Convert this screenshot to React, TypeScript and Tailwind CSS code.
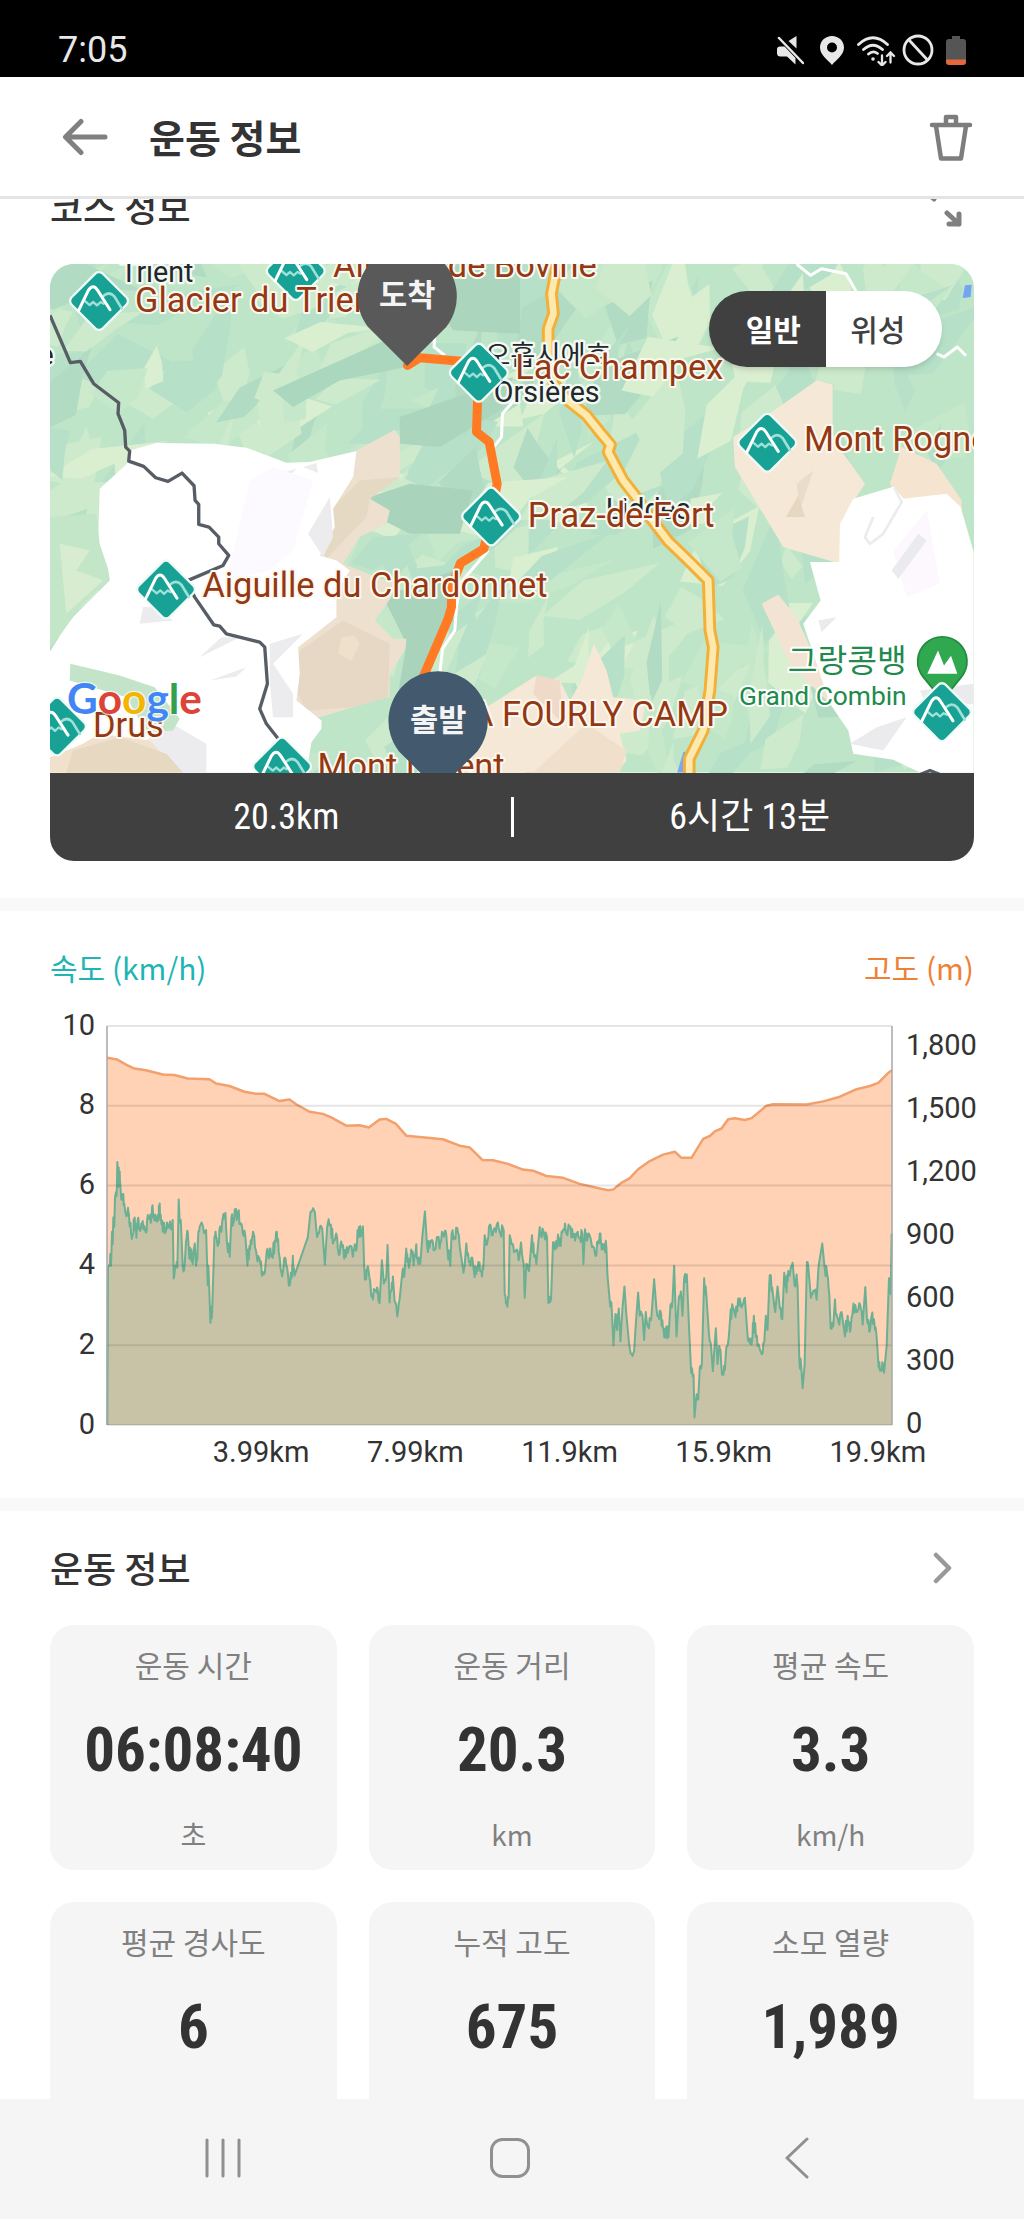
import React from "react";

type Point = [number, number];

const parse = (raw: string): Point[] =>
  raw
    .trim()
    .split(/\s+/)
    .map((pair) => pair.split(",").map(Number) as Point);

const toPath = (points: Point[]) =>
  points.map(([x, y], i) => `${i ? "L" : "M"}${x} ${y}`).join("");

/* ---------- Status bar ---------- */

function StatusBar() {
  return (
    <div className="flex h-[77px] shrink-0 items-center justify-between bg-black pt-[23px] pr-[57px] pl-[58px] text-[#e8e8e8]">
      <span className="font-['Roboto',sans-serif] text-[36px] leading-none">7:05</span>
      <div className="flex items-center">
        <svg className="h-8 w-7" viewBox="0 0 28 32" aria-label="Muted" role="img">
          <path d="M20.500 2V14.500L12.500 7ZM4 12.500H8.500L19.500 24V30.500L11 22.500H4.500Q1 22.500 1 19V15.500Q1 12.500 4 12.500Z" fill="currentColor" />
          <path d="M3 4L27 29" stroke="currentColor" strokeWidth="2.500" strokeLinecap="round" />
        </svg>
        <svg className="ml-[14px] h-8 w-7" viewBox="0 0 28 32" aria-label="Location" role="img">
          <path
            fillRule="evenodd"
            fill="currentColor"
            d="M14 2C7.300 2 2 7 2 13.500 2 21 10 26 14 31c4-5 12-10 12-17.500C26 7 20.700 2 14 2zm0 6.500a5 5 0 1 1 0 10 5 5 0 0 1 0-10z"
          />
        </svg>
        <svg className="ml-[10px] h-8 w-10" viewBox="0 0 40 32" aria-label="Wi-Fi" role="img" fill="none" stroke="currentColor" strokeWidth="2.800" strokeLinecap="round">
          <path d="M2.500 10.500Q17 -3 31.500 10.500M7.500 15.500Q17 7 26.500 15.500M12.500 20Q17 16 21.500 19.500" />
          <circle cx="17" cy="25" r="1.800" fill="currentColor" stroke="none" />
          <path strokeWidth="2.300" d="M26 21.500V31M22.500 28l3.500 3.500 3.500-3.500M34.500 28.500V19M31 22l3.500-3.500L38 22" />
        </svg>
        <svg className="ml-[6px] h-8 w-8" viewBox="0 0 32 32" aria-label="Blocked" role="img" fill="none" stroke="currentColor" strokeWidth="2.800">
          <circle cx="16" cy="16" r="14" />
          <path d="M7 6L25.500 26" />
        </svg>
        <svg className="ml-[11px] h-8 w-[22px]" viewBox="0 0 22 32" aria-label="Battery low" role="img">
          <path d="M7 2h8v3h3q3 0 3 3v18H1V8q0-3 3-3h3z" fill="#555" />
          <path d="M1 25.500h20V28q0 3-3 3H4q-3 0-3-3z" fill="#e4683c" />
        </svg>
      </div>
    </div>
  );
}

/* ---------- Header ---------- */

function Header() {
  return (
    <header className="flex h-[122px] shrink-0 items-center border-b-[3px] border-[#e4e4e4] bg-white pr-[51px] pl-[62px]">
      <button type="button" aria-label="뒤로" className="text-[#808080]">
        <svg className="h-10 w-[46px]" viewBox="0 0 46 40" fill="none" stroke="currentColor" strokeWidth="5" strokeLinecap="round" strokeLinejoin="round">
          <path d="M19 4.500L3.500 20L19 35.500M4 20H43" />
        </svg>
      </button>
      <h1 className="ml-[41px] pb-[2px] text-[39px] leading-[56px] font-bold text-[#333]">운동 정보</h1>
      <button type="button" aria-label="삭제" className="ml-auto text-[#7d7d7d]">
        <svg className="h-12 w-[44px]" viewBox="0 0 44 48" fill="none" stroke="currentColor" strokeWidth="4.500" strokeLinecap="round" strokeLinejoin="round">
          <path d="M3 12H41M7 13L12 45.500H32L37 13M17 11V4H27V11" />
        </svg>
      </button>
    </header>
  );
}

/* ---------- Map ---------- */

const SHADES = ["#cdebcc", "#cdebcc", "#daeed0", "#b2dbc4", "#b6e0c8", "#b6e0c8", "#c6e8ca"];

function makeFacets(count: number) {
  let seed = 4711;
  const rnd = () => {
    seed = (seed * 16807) % 2147483647;
    return seed / 2147483647;
  };
  return Array.from({ length: count }, () => {
    const cx = rnd() * 2800;
    const cy = rnd() * 1560;
    const len = 60 + rnd() * 140;
    const wid = 25 + rnd() * 65;
    const angle = (cx < 1400 ? -0.7 : -1.1) + (rnd() - 0.5) * 1.6;
    const c = Math.cos(angle);
    const s = Math.sin(angle);
    const corner = (u: number, v: number): string =>
      `${Math.round(cx + u * c - v * s)},${Math.round(cy + u * s + v * c)}`;
    return {
      points: [
        corner(-len, (rnd() - 0.5) * wid),
        corner(-len * 0.2, -wid),
        corner(len, (rnd() - 0.5) * wid),
        corner(len * 0.3, wid * rnd()),
        corner(-len * 0.5, wid),
      ].join(" "),
      fill: SHADES[Math.floor(rnd() * SHADES.length)],
    };
  });
}

const FACETS = makeFacets(300);

const PEAKS: Point[] = [
  [178, 152],
  [768, 62],
  [1317, 367],
  [1354, 798],
  [2182, 577],
  [379, 1017],
  [52, 1428],
  [727, 1548],
  [2706, 1385],
];

function Peak({ x, y }: { x: number; y: number }) {
  return (
    <g transform={`translate(${x} ${y})`}>
      <rect x="-66" y="-66" width="132" height="132" rx="16" transform="rotate(45)" fill="#17a295" stroke="#effaf6" strokeWidth="7" />
      <g fill="none" strokeLinecap="round" strokeLinejoin="round">
        <path d="M14 -16Q30 -30 46 -14L68 22" stroke="#9fe0d8" strokeWidth="8" />
        <path d="M-42 0L-28 12L-17 3L-6 13L5 3L14 8" stroke="#9fe0d8" strokeWidth="7" />
        <path d="M-62 30L-32 -32Q-18 -54 -4 -32L33 26" stroke="#fff" strokeWidth="9" />
      </g>
    </g>
  );
}

function Pin({ x, y, fill, label }: { x: number; y: number; fill: string; label: string }) {
  return (
    <g transform={`translate(${x} ${y})`}>
      <path d="M0 210L-118 92A149 149 0 1 1 118 92Z" fill={fill} />
      <text x="0" y="30" textAnchor="middle" fontSize="92" fontWeight="700" fill="#f4f4f4" fontFamily="Noto Sans CJK KR, sans-serif">
        {label}
      </text>
    </g>
  );
}

const PLACES: { x: number; y: number; text: string; anchor?: "start" | "end" }[] = [
  { x: 880, y: 80, text: "Alpage de Bovine" },
  { x: 286, y: 185, text: "Glacier du Trient" },
  { x: 1426, y: 387, text: "Lac Champex" },
  { x: 1464, y: 830, text: "Praz-de-Fort" },
  { x: 2292, y: 602, text: "Mont Rogneux" },
  { x: 488, y: 1039, text: "Aiguille du Chardonnet" },
  { x: 160, y: 1460, text: "Drus" },
  { x: 833, y: 1582, text: "Mont Dolent" },
  { x: 2064, y: 1426, text: "LA FOURLY CAMP", anchor: "end" },
];

const GOOGLE: [string, string][] = [
  ["G", "#4285f4"],
  ["o", "#db4437"],
  ["o", "#f4b400"],
  ["g", "#4285f4"],
  ["l", "#34a04f"],
  ["e", "#db4437"],
];

const TRAIL_ROAD =
  "M1552 41L1535 130L1541 190L1525 235V310L1542 400L1590 455L1640 495L1680 545L1712 583L1705 605L1750 690L1785 735L1830 800L1885 872L1945 930L2005 990L2010 1140L2020 1190L2010 1320L1990 1440L1948 1525V1570";

function CourseMap() {
  return (
    <svg className="block w-full" viewBox="31 41 2771 1525" role="img" aria-label="코스 지도">
      <rect x="31" y="41" width="2771" height="1525" fill="#bfe5c8" />
      {FACETS.map((f, i) => (
        <polygon key={i} points={f.points} fill={f.fill} />
      ))}
      <polygon points="1250,41 1440,41 1440,250 1240,240 1200,180" fill="#abd5bd" />
      <polygon points="1080,500 1420,380 1380,480 1200,590 1080,580" fill="#abd5bd" />
      <polygon points="700,420 1080,250 1100,350 900,390 760,470" fill="#acd7bf" />
      <polygon points="990,740 1110,700 1300,720 1260,850 1110,850 1010,800" fill="#a9d4bb" />
      <polygon points="1030,1040 1240,960 1200,1200 1060,1420 1100,1180" fill="#a9d4bb" />

      {/* Tan ridges */}
      <polygon points="950,600 1065,538 1080,560 1080,680 990,745 1050,780 1040,820 960,860 910,940 1060,1000 1055,1040 1005,1110 1060,1165 1100,1165 1095,1200 1050,1270 1050,1340 1000,1350 940,1370 840,1400 740,1400 700,1100 820,900 880,760" fill="#eee0ce" />
      <polygon points="960,690 1080,680 990,745 980,800 860,925 840,900 880,770" fill="#e6d9c3" />
      <polygon points="780,1200 910,1110 1050,1180 1045,1340 940,1370 800,1380 760,1300" fill="#e6d8c4" />
      <polygon points="905,1160 945,1155 960,1180 935,1230 895,1210" fill="#efe0cc" />
      <polygon points="2160,510 2330,390 2378,402 2378,565 2475,700 2410,800 2400,940 2230,890 2170,790 2085,650 2080,560" fill="#f6e8d6" />
      <polygon points="2270,700 2320,660 2280,780" fill="#eadccb" />
      <polygon points="2275,735 2295,800 2238,800" fill="#e6d7c2" />
      <polygon points="2585,590 2690,640 2765,750 2765,800 2600,780 2550,700" fill="#f5e4d0" />
      <polygon points="2165,1060 2215,1032 2270,1100 2310,1190 2420,1370 2360,1350 2250,1240" fill="#f3e3d2" />
      <polygon points="1130,1566 1340,1370 1490,1275 1560,1290 1590,1350 1625,1290 1662,1180 1700,1260 1720,1340 1820,1350 1800,1440 1740,1450 1760,1530 1730,1566" fill="#f6e8d6" />
      <polygon points="1490,1275 1560,1290 1570,1420 1480,1330" fill="#efd9c8" />
      <polygon points="1480,1566 1640,1420 1760,1500 1740,1566" fill="#f0dfcb" />

      {/* Snow fields */}
      <polygon points="270,600 350,578 520,580 620,592 740,637 810,635 950,602 940,680 880,775 885,830 840,915 890,930 930,960 890,1030 890,1100 775,1190 780,1270 770,1350 845,1410 845,1435 815,1475 800,1566 31,1566 31,1202 90,1110 210,990 200,950 175,890 180,715 262,640" fill="#fff" />
      <polygon points="31,800 170,790 180,880 205,955 210,985 130,1060 31,1195" fill="#c3e6c9" />
      <polygon points="60,880 150,900 110,960 190,990 80,1090" fill="#d8edd0" />
      <g fill="#ececee">
        <polygon points="688,680 770,655 720,705" />
        <polygon points="790,650 830,638 835,668" />
        <polygon points="630,885 735,845 738,862 650,898" />
        <polygon points="805,850 870,740 880,860 850,920" />
        <polygon points="310,1070 345,1070 400,1110 300,1120" />
        <polygon points="480,1220 545,1160 600,1160" />
        <polygon points="510,1290 620,1250 590,1278" />
        <polygon points="690,1180 790,1150 700,1240 760,1330 760,1400 700,1400 690,1290" />
        <polygon points="310,1480 380,1410 500,1480 500,1566 400,1566" />
      </g>
      <polygon points="630,690 700,650 820,690 760,900 690,960 560,990" fill="#fdfaff" />
      <polygon points="92,1240 240,1275 345,1310 420,1405 400,1440 320,1445 260,1340 90,1290" fill="#c3e4c8" />
      <polygon points="31,1520 130,1480 180,1450 330,1470 420,1566 31,1566" fill="#f0e0cc" />
      <polygon points="100,1500 240,1460 380,1510 430,1566 80,1566" fill="#e7d8c2" />
      <polygon points="2398,935 2400,820 2440,745 2562,708 2590,745 2720,730 2762,770 2801,905 2801,1566 2640,1566 2560,1528 2440,1510 2425,1440 2370,1360 2290,1120 2342,1050 2310,935" fill="#fff" />
      <polygon points="2560,900 2660,780 2700,1000 2600,1040" fill="#fcf8fd" />
      <g fill="#ebebed">
        <polygon points="2635,850 2660,870 2575,985 2555,960" />
        <polygon points="2335,1110 2390,1100 2345,1145" />
        <polygon points="2430,1480 2510,1430 2600,1400 2530,1500" />
        <polygon points="2640,1320 2801,1300 2801,1360 2660,1370" />
      </g>
      <path d="M2562 710L2585 755L2530 850L2490 880L2475 860L2500 800" fill="none" stroke="#ececec" strokeWidth="8" />

      {/* Minor roads and water */}
      <g fill="none" stroke="#fff" strokeWidth="9" strokeLinejoin="round">
        <path d="M1185 240L1183 290L1215 315M1440 430L1388 490L1385 560L1350 605M1345 900L1260 1000L1250 1070L1245 1140L1208 1195L1200 1270" />
        <path d="M2270 41L2312 75L2345 55L2418 70L2448 122M2690 310L2712 320L2752 290L2778 316" />
      </g>
      <polygon points="2775,105 2795,103 2792,140 2768,143" fill="#73a5f3" />
      <polygon points="1930,1505 1950,1500 1930,1566 1912,1566" fill="#7da7ee" />

      {/* Main road */}
      <path d={TRAIL_ROAD} fill="none" stroke="#f3b038" strokeWidth="38" strokeLinejoin="round" />
      <path d={TRAIL_ROAD} fill="none" stroke="#fde8ad" strokeWidth="20" strokeLinejoin="round" />

      {/* National border */}
      <path
        d="M31 195L92 337L122 333L162 400L237 457L235 490L255 540L258 590L270 602L267 632L312 648L348 682L385 693L427 668L463 706L466 750L477 762V822L508 830L537 860V880L567 915L550 945L440 992L465 1040L522 1123L540 1127L560 1150L660 1175L675 1190L683 1300L660 1375L680 1420L727 1480M2640 1572L2670 1560L2700 1572"
        fill="none"
        stroke="#575d65"
        strokeWidth="10"
        strokeLinejoin="round"
      />

      {/* Recorded route */}
      <g fill="none" stroke="#ff7a22" strokeWidth="27" strokeLinecap="round" strokeLinejoin="round">
        <path d="M1103 345L1140 322L1317 337L1310 545L1348 575L1372 700L1354 798L1332 895L1262 938L1235 1010V1070L1225 1105L1150 1280" />
      </g>

      {/* Town names */}
      <g fontSize="86" fill="#23272b" stroke="#f3faf3" strokeWidth="14" strokeLinejoin="round" paintOrder="stroke" fontFamily="Roboto, Noto Sans CJK KR, sans-serif">
        <text x="242" y="95">Trient</text>
        <text x="42" y="345" textAnchor="end">Vallorcine</text>
        <text x="1336" y="345" fontSize="82">오흡시에흐</text>
        <text x="1362" y="456">Orsières</text>
        <text x="1698" y="806">Liddes</text>
      </g>

      {PEAKS.map(([x, y]) => (
        <React.Fragment key={`${x}-${y}`}>
          {x === 2706 && (
            <g>
              <path d="M2707 1350L2650 1280A74 74 0 1 1 2764 1280Z" fill="#2fa84f" stroke="#218a3f" strokeWidth="5" />
              <path d="M2662 1270L2694 1200L2712 1245L2733 1216L2752 1270Z" fill="#fff" />
            </g>
          )}
          <Peak x={x} y={y} />
        </React.Fragment>
      ))}

      {/* Landmark names */}
      <g fontSize="103" fill="#933813" stroke="#fdf8f0" strokeWidth="12" strokeLinejoin="round" paintOrder="stroke" fontFamily="Roboto, sans-serif">
        {PLACES.map((p) => (
          <text key={p.text} x={p.x} y={p.y} textAnchor={p.anchor ?? "start"}>
            {p.text}
          </text>
        ))}
      </g>
      <g fill="#218a4c" stroke="#fff" strokeWidth="12" strokeLinejoin="round" paintOrder="stroke" textAnchor="end">
        <text x="2600" y="1264" fontSize="97" fontFamily="Noto Sans CJK KR, sans-serif">그랑콩뱅</text>
        <text x="2600" y="1364" fontSize="79" fontFamily="Roboto, sans-serif">Grand Combin</text>
      </g>

      <text x="82" y="1391" fontSize="127" fontFamily="Lato, sans-serif" fontWeight="700" stroke="#fff" strokeWidth="8" paintOrder="stroke" strokeOpacity="0.700">
        {GOOGLE.map(([ch, color], i) => (
          <tspan key={i} fill={color}>
            {ch}
          </tspan>
        ))}
      </text>

      <Pin x={1102} y={137} fill="#595959" label="도착" />
      <Pin x={1195} y={1410} fill="#43596d" label="출발" />
    </svg>
  );
}

function CourseSection() {
  return (
    <section className="-mt-[49px] px-[50px] pb-[37px]">
      <div className="flex h-[114px] items-center justify-between pr-[12px]">
        <h2 className="pb-[2px] text-[36px] leading-[52px] font-medium text-[#333]">코스 정보</h2>
        <button type="button" aria-label="지도 확대" className="text-[#808080]">
          <svg className="h-[44px] w-[44px]" viewBox="0 0 44 44" fill="none" stroke="currentColor" strokeWidth="5" strokeLinecap="round" strokeLinejoin="round">
            <path d="M4 11V3H12M4 3L16 14M29 28L41 39M41 29V39H31" />
          </svg>
        </button>
      </div>
      <div className="relative overflow-hidden rounded-[24px]">
        <CourseMap />
        <div className="absolute top-[27px] right-[32px] flex h-[76px] w-[233px] overflow-hidden rounded-full text-[30px] shadow-md">
          <button type="button" aria-pressed="true" className="flex-1 bg-[#404040] pb-[2px] pl-3 font-bold text-white">
            일반
          </button>
          <button type="button" aria-pressed="false" className="flex-1 bg-white pr-3 pb-[2px] font-medium text-[#404040]">
            위성
          </button>
        </div>
        <div className="flex h-[88px] items-center bg-[#404040] font-['Roboto_Condensed','Noto_Sans_CJK_KR',sans-serif] text-[36px] text-white">
          <span className="flex-1 pl-3 text-center">20.3km</span>
          <span className="h-10 w-[3px] bg-white" />
          <span className="flex-1 pl-3 text-center">6시간 13분</span>
        </div>
      </div>
    </section>
  );
}

/* ---------- Chart ---------- */

const ELEVATION = parse(`
233,358 264,363 290,377 315,388 350,393 400,405 435,406 475,416 540,418 560,430 600,437 645,453 680,459 705,459
750,479 780,475 800,488 840,509 880,515 905,525 950,548 990,547 1018,553 1050,531 1070,529 1098,542 1130,576
1240,586 1290,604 1320,609 1358,644 1390,645 1435,655 1480,671 1510,674 1550,689 1600,694 1650,711 1710,724
1735,729 1750,727 1775,708 1800,695 1825,670 1860,647 1900,629 1935,621 1955,638 1985,638 2020,585 2040,577
2055,564 2075,556 2095,530 2115,527 2145,532 2165,527 2210,492 2230,488 2330,489 2380,480 2430,467 2480,446
2520,437 2545,428 2575,400 2586,393`);

const SPEED = parse(`
234,1386 236,945 242,935 246,915 248,845 250,880 252,805 255,825 257,750 262,745 264,650 267,720 268,665 272,705
275,745 279,740 283,770 288,790 296,778 300,820 305,850 312,848 316,805 321,862 325,812 331,835 336,822 342,838
348,843 353,815 360,805 364,820 368,778 373,800 380,810 388,812 391,766 395,812 400,845 404,820 410,842 418,825
424,838 430,812 433,976 438,940 444,945 448,755 451,820 455,830 460,942 466,935 470,870 475,845 480,920 486,895
490,935 496,878 500,940 505,880 511,830 520,827 530,840 535,995 537,940 543,1100 549,1045 555,860 560,862 565,885
570,840 576,845 582,795 588,792 592,870 601,915 606,805 612,820 616,782 622,812 628,785 634,825 640,850 648,860
654,940 660,885 666,880 671,845 680,900 690,920 697,968 706,960 712,898 718,920 723,892 730,918 736,870 742,845
748,905 756,960 762,945 768,920 776,970 782,990 788,965 790,912 795,968 835,860 843,790 856,790 860,835 868,850
878,835 886,937 893,830 904,825 910,878 920,850 928,910 935,872 944,920 952,888 960,885 970,915 976,880 982,885
988,832 994,858 1000,830 1004,945 1010,978 1015,942 1022,985 1030,1035 1038,1008 1045,1010 1050,1045 1057,925
1063,990 1070,975 1074,882 1080,1043 1086,1010 1090,970 1095,1040 1103,1082 1110,1035 1118,960 1124,970 1130,892
1134,930 1140,930 1145,895 1152,938 1160,880 1166,935 1172,935 1178,860 1186,788 1192,880 1200,890 1207,868
1215,895 1222,860 1230,892 1237,845 1246,842 1252,880 1262,940 1266,850 1274,860 1283,835 1290,885 1300,948
1305,940 1310,878 1318,930 1325,918 1332,950 1340,963 1346,930 1355,955 1361,950 1365,855 1372,880 1378,830
1386,855 1394,835 1401,826 1410,845 1422,840 1425,1020 1431,1045 1437,1030 1440,855 1450,880 1458,900 1467,925
1474,875 1482,935 1485,1030 1490,935 1498,955 1507,855 1513,915 1520,935 1530,832 1536,860 1542,847 1552,860
1556,1045 1564,1035 1570,875 1576,895 1585,853 1593,885 1600,840 1606,822 1613,855 1622,830 1630,860 1640,850
1650,862 1658,850 1661,935 1666,838 1672,870 1683,865 1693,890 1700,910 1706,870 1712,850 1716,895 1724,880
1730,890 1733,965 1740,1040 1745,1045 1751,1163 1757,1075 1762,1120 1767,1060 1772,1152 1778,1060 1784,998
1790,1080 1797,1150 1806,1188 1813,1180 1818,1105 1825,1015 1830,1080 1838,1080 1843,1148 1848,1070 1853,1108
1864,1092 1873,978 1880,1060 1888,1090 1894,1075 1899,1110 1906,1140 1910,1110 1916,1140 1922,1050 1928,1040
1933,940 1940,1138 1947,1030 1953,1012 1958,1080 1963,975 1971,965 1977,1100 1984,1240 1991,1245 1994,1365
1998,1320 2005,1315 2010,1225 2016,1215 2023,975 2030,1030 2038,1140 2044,1170 2049,1235 2058,1115 2063,1215
2068,1165 2074,1215 2081,1245 2087,1200 2094,1160 2100,1100 2107,1048 2114,1072 2122,1068 2130,1032 2138,1050
2145,1030 2151,1110 2160,1158 2168,1140 2172,1080 2178,1140 2186,1160 2196,1188 2203,1155 2208,1080 2213,1120
2218,995 2223,968 2229,1020 2236,1070 2243,998 2250,1060 2257,1090 2263,960 2270,1015 2275,955 2282,950 2288,932
2294,995 2300,965 2303,995 2308,1200 2314,1225 2318,1283 2324,1220 2331,930 2337,965 2343,1030 2350,1010
2360,1035 2366,940 2377,878 2384,945 2392,965 2398,1020 2402,1115 2410,1110 2415,1035 2422,1085 2428,1105
2435,1070 2445,1138 2453,1080 2460,1125 2467,1078 2476,1050 2484,1065 2490,1048 2498,1105 2506,1000 2511,1090
2518,1125 2524,1085 2532,1090 2540,1140 2546,1225 2552,1230 2557,1210 2562,1240 2570,1165 2577,975 2582,1020
2585,850`);

const SPEED_NOISY = SPEED.flatMap(([x, y], i): Point[] => {
  const next = SPEED[i + 1];
  if (!next || i < 2 || Math.abs(next[1] - y) > 60 || next[0] - x > 20) return [[x, y]];
  const mx = (x + next[0]) / 2;
  const my = (y + next[1]) / 2;
  return [
    [x, y],
    [mx - 1, Math.round(my + 18 * Math.sin(i * 2.3))],
    [mx + 1, Math.round(my - 16 * Math.sin(i * 1.7 + 1))],
  ];
});

const GRID = [269, 492.4, 715.8, 939.2, 1162.6, 1386];
const SPEED_TICKS = ["10", "8", "6", "4", "2", "0"];
const ELEVATION_TICKS = ["1,800", "1,500", "1,200", "900", "600", "300", "0"];
const DISTANCE_TICKS = ["3.99km", "7.99km", "11.9km", "15.9km", "19.9km"];

function ChartSection() {
  return (
    <section className="px-[50px] pt-[33px] pb-[27px]">
      <div className="flex h-[48px] items-center justify-between text-[30px]">
        <h2 className="text-[#1fb5b5]">속도 (km/h)</h2>
        <h2 className="text-[#ee8136]">고도 (m)</h2>
      </div>
      <div className="mt-[34px] flex h-[399px] font-['Roboto',sans-serif] text-[29px] leading-8 text-[#333]">
        <div className="-mt-[17px] -mb-[15px] flex w-[57px] flex-col justify-between pr-3 text-right">
          {SPEED_TICKS.map((t) => (
            <span key={t}>{t}</span>
          ))}
        </div>
        <svg className="h-full min-w-0 flex-1 overflow-visible" viewBox="233 269 2353 1117" preserveAspectRatio="none" role="img" aria-label="속도와 고도 그래프">
          <path d={`${toPath(ELEVATION)}L2586 1386L233 1386Z`} fill="#ffd1b5" />
          <path d={`${toPath(SPEED_NOISY)}L2586 1386Z`} fill="#c8c3a7" />
          <path d={toPath(ELEVATION)} fill="none" stroke="#f2a06c" strokeWidth="2.500" strokeLinejoin="round" vectorEffect="non-scaling-stroke" />
          <path d={toPath(SPEED_NOISY)} fill="none" stroke="#6cb094" strokeWidth="2" strokeLinejoin="round" vectorEffect="non-scaling-stroke" />
          {GRID.map((y) => (
            <path key={y} d={`M233 ${y}H2586`} stroke="#000" strokeOpacity="0.100" strokeWidth="2" vectorEffect="non-scaling-stroke" />
          ))}
          <path d="M233 269V1386M2586 269V1386" stroke="#a8a8a8" strokeWidth="1.500" vectorEffect="non-scaling-stroke" />
        </svg>
        <div className="-mb-[15px] flex w-[82px] flex-col justify-between pt-[3px] pl-[14px]">
          {ELEVATION_TICKS.map((t) => (
            <span key={t}>{t}</span>
          ))}
        </div>
      </div>
      <div className="mt-[9px] mr-[19px] mb-[1px] ml-[134px] grid grid-cols-5 text-center font-['Roboto',sans-serif] text-[29px] leading-9 text-[#333]">
        {DISTANCE_TICKS.map((t) => (
          <span key={t}>{t}</span>
        ))}
      </div>
    </section>
  );
}

/* ---------- Statistics ---------- */

const STATS: { label: string; value: string; unit?: string }[] = [
  { label: "운동 시간", value: "06:08:40", unit: "초" },
  { label: "운동 거리", value: "20.3", unit: "km" },
  { label: "평균 속도", value: "3.3", unit: "km/h" },
  { label: "평균 경사도", value: "6" },
  { label: "누적 고도", value: "675" },
  { label: "소모 열량", value: "1,989" },
];

function StatsSection() {
  return (
    <section className="px-[50px]">
      <div className="flex h-[114px] items-center justify-between pr-[20px]">
        <h2 className="pb-[2px] text-[36px] leading-[52px] font-medium text-[#333]">운동 정보</h2>
        <button type="button" aria-label="운동 정보 더보기" className="text-[#999]">
          <svg className="h-8 w-[24px]" viewBox="0 0 24 32" fill="none" stroke="currentColor" strokeWidth="4.500" strokeLinecap="round" strokeLinejoin="round">
            <path d="M6 3L19 16L6 29" />
          </svg>
        </button>
      </div>
      <dl className="grid grid-cols-3 gap-8">
        {STATS.map((s) => (
          <div key={s.label} className="flex h-[245px] flex-col items-center rounded-[24px] bg-[#f5f5f5] pt-[19px]">
            <dt className="text-[30px] leading-10 text-[#808080]">{s.label}</dt>
            <dd className="mt-[34px] font-['Roboto_Condensed','Noto_Sans_CJK_KR',sans-serif] text-[61px] leading-[64px] font-bold text-[#333]">
              {s.value}
            </dd>
            {s.unit && <dd className="mt-[34px] text-[28px] leading-9 text-[#808080]">{s.unit}</dd>}
          </div>
        ))}
      </dl>
    </section>
  );
}

/* ---------- System navigation ---------- */

function NavBar() {
  return (
    <nav className="grid h-[120px] shrink-0 grid-cols-3 place-items-center bg-[#f5f5f5] pr-[84px] pb-[3px] pl-[79px] text-[#909090]">
      <button type="button" aria-label="최근 앱">
        <svg className="h-10 w-10" viewBox="0 0 40 40" fill="none" stroke="currentColor" strokeWidth="3" strokeLinecap="round">
          <path d="M4 2V38M20 2V38M36 2V38" />
        </svg>
      </button>
      <button type="button" aria-label="홈">
        <svg className="h-[42px] w-[42px]" viewBox="0 0 42 42" fill="none" stroke="currentColor" strokeWidth="3">
          <rect x="2.500" y="2.500" width="37" height="37" rx="11" />
        </svg>
      </button>
      <button type="button" aria-label="뒤로 가기">
        <svg className="h-[42px] w-[26px]" viewBox="0 0 26 42" fill="none" stroke="currentColor" strokeWidth="3" strokeLinecap="round" strokeLinejoin="round">
          <path d="M23 2L3 21L23 40" />
        </svg>
      </button>
    </nav>
  );
}

export default function App() {
  return (
    <div className="flex h-screen flex-col overflow-hidden bg-white font-['Noto_Sans_CJK_KR',sans-serif]">
      <StatusBar />
      <Header />
      <main className="min-h-0 flex-1 overflow-hidden">
        <CourseSection />
        <div className="h-[13px] bg-[#f9f9f9]" />
        <ChartSection />
        <div className="h-[13px] bg-[#f9f9f9]" />
        <StatsSection />
      </main>
      <NavBar />
    </div>
  );
}
